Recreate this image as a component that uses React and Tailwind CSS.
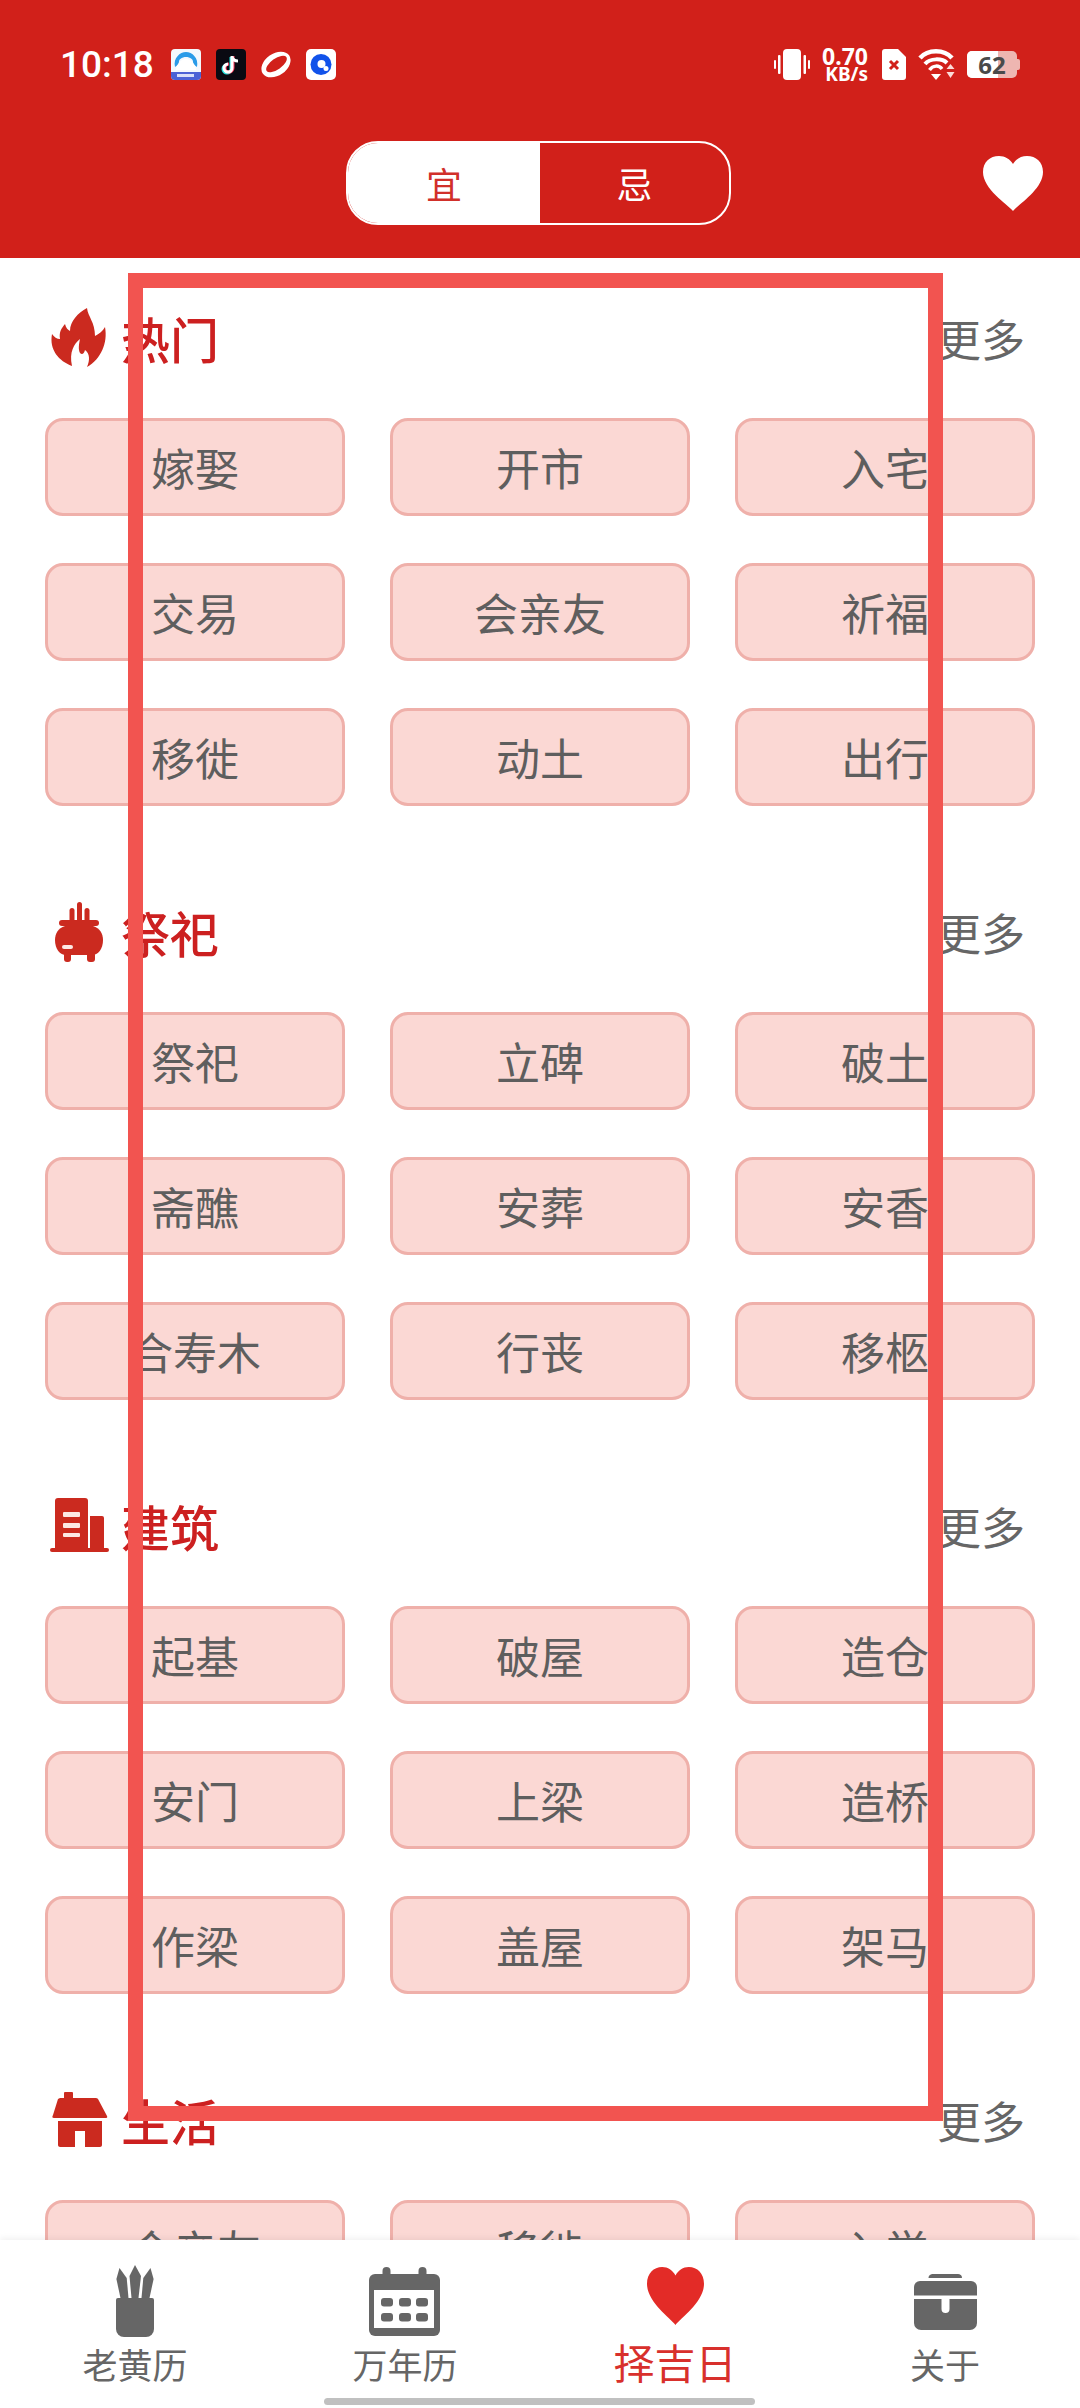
const SECTIONS = [
  { title: "热门", icon: FlameIcon, items: ["嫁娶", "开市", "入宅", "交易", "会亲友", "祈福", "移徙", "动土", "出行"] },
  { title: "祭祀", icon: CenserIcon, items: ["祭祀", "立碑", "破土", "斋醮", "安葬", "安香", "合寿木", "行丧", "移柩"] },
  { title: "建筑", icon: BuildingIcon, items: ["起基", "破屋", "造仓", "安门", "上梁", "造桥", "作梁", "盖屋", "架马"] },
  { title: "生活", icon: HouseIcon, items: ["会亲友", "移徙", "入学"] },
];

const HEART = "M30 55 C24 48 0 33 0 16 C0 6 7 0 16 0 C22 0 27 3 30 8 C33 3 38 0 44 0 C53 0 60 6 60 16 C60 33 36 48 30 55 Z";

function FlameIcon() {
  return (
    <svg width="64" height="64" viewBox="0 0 64 64" fill="#cb2a1f">
      <path d="M39 0 C40 9 47 14 47 28 C51 26 55 23 57 19 C60 35 53 51 39 59 C42 52 42 46 37 42 C36 46 34 47 32 45 C30 41 31 36 32 31 C26 36 21 44 24 58 C11 53 1 42 4 26 C6 29 9 31 12 31 C11 24 13 21 17 16 C18 20 20 22 22 23 C22 13 30 5 39 0 Z" />
    </svg>
  );
}

function CenserIcon() {
  return (
    <svg width="64" height="64" viewBox="0 0 64 64" fill="#cb2a1f">
      <rect x="29" y="0" width="5" height="20" rx="2.500" />
      <rect x="21.500" y="6" width="5" height="14" rx="2.500" />
      <rect x="36.500" y="6" width="5" height="14" rx="2.500" />
      <rect x="11" y="18" width="40" height="6" rx="3" />
      <path d="M17 24 H45 C52 26 55 32 55 38 C55 47 50 53 44 53 H18 C12 53 7 47 7 38 C7 32 10 26 17 24 Z" />
      <rect x="16" y="50" width="7" height="10" rx="3" />
      <rect x="39" y="50" width="8" height="10" rx="3" />
      <rect x="14" y="43" width="11" height="4" rx="2" fill="#fde8e4" />
    </svg>
  );
}

function BuildingIcon() {
  return (
    <svg width="64" height="64" viewBox="0 0 64 64" fill="#cb2a1f">
      <path d="M10 2 H37 A3 3 0 0 1 40 5 V53 H7 V5 A3 3 0 0 1 10 2 Z" />
      <path d="M42 20 H54 A2 2 0 0 1 56 22 V53 H42 Z" />
      <rect x="2" y="52" width="59" height="4" rx="2" />
      <rect x="15" y="16" width="17" height="5" rx="1" fill="#fde8e4" />
      <rect x="15" y="27" width="17" height="5" rx="1" fill="#fde8e4" />
      <rect x="15" y="37" width="17" height="4" rx="1" fill="#fde8e4" />
    </svg>
  );
}

function HouseIcon() {
  return (
    <svg width="64" height="64" viewBox="0 0 64 64" fill="#cb2a1f">
      <rect x="16" y="2" width="9" height="10" rx="1" />
      <path d="M12 8 H48 C49 8 50 9 50 9 L59 26 C60 28 58 28 57 28 H6 C4 28 4 27 5 25 L10 9 Z" />
      <path d="M10 31 H54 V55 C54 56 53 57 52 57 H37 V41 H27 V57 H12 C11 57 10 56 10 55 Z" />
    </svg>
  );
}

function PenCupIcon() {
  return (
    <svg width="60" height="80" viewBox="0 0 60 80" fill="#666666">
      <path d="M30 3 L36 14 L33.500 36 H26.500 L24.500 14 Z" />
      <path d="M14.500 6 L21.700 16 L23.500 36 H15.500 L11.400 17 Z" />
      <path d="M45.500 6 L48.600 17 L44.500 36 H36.500 L38.300 16 Z" />
      <path d="M13 36 H47 A2 2 0 0 1 49 38 V67 A8 8 0 0 1 41 75 H19 A8 8 0 0 1 11 67 V38 A2 2 0 0 1 13 36 Z" />
    </svg>
  );
}

function CalendarIcon() {
  return (
    <svg width="72" height="70" viewBox="0 0 72 70" fill="#666666">
      <rect x="13.500" y="0" width="8" height="14" rx="4" />
      <rect x="49.500" y="0" width="8" height="14" rx="4" />
      <rect x="0" y="7" width="71" height="62" rx="6" />
      <rect x="5" y="23" width="60" height="38" fill="#ffffff" />
      {[12, 30, 47].map((x) => (
        <g key={x}>
          <rect x={x} y="31" width="12" height="8.500" rx="3" />
          <rect x={x} y="46" width="12" height="8.500" rx="3" />
        </g>
      ))}
    </svg>
  );
}

function BoxIcon() {
  return (
    <svg width="63" height="57" viewBox="0 0 63 57" fill="#666666">
      <path d="M14.500 4 C14.500 1 17 0 19 0 H44 C46 0 48 1 48 4 Z" />
      <path d="M6 7 H57 A6 6 0 0 1 63 13 V21.500 H0 V13 A6 6 0 0 1 6 7 Z" />
      <path d="M0 25 H27.500 V35 A4 4 0 0 0 35.500 35 V25 H63 V49 A7 7 0 0 1 56 56 H7 A7 7 0 0 1 0 49 Z" />
    </svg>
  );
}

function StatusApps() {
  return (
    <div className="flex items-center gap-[15px] ml-[17px]">
      <svg width="30" height="31" viewBox="0 0 30 31">
        <rect width="30" height="31" rx="4" fill="#f4f8fd" />
        <path d="M4 18 C2 9 9 3 15 3 C21 3 28 9 26 18 L22 15 C23 10 19 8 15 8 C11 8 7 10 8 15 Z" fill="#2a9be8" />
        <path d="M5 21 C6 14 10 10 15 10 C20 10 24 14 25 21 Z" fill="#ffffff" />
        <path d="M0 23 H30 V27 A4 4 0 0 1 26 31 H4 A4 4 0 0 1 0 27 Z" fill="#4b62d6" />
        <rect x="6" y="25" width="17" height="3" fill="#d8def8" />
      </svg>
      <svg width="30" height="31" viewBox="0 0 30 31" fill="none">
        <rect width="30" height="31" rx="4" fill="#0a0a12" />
        <path d="M16 7 V19 A4 4 0 1 1 12 15" stroke="#25e4e0" strokeWidth="3" transform="translate(-1 1)" />
        <path d="M16 7 V19 A4 4 0 1 1 12 15" stroke="#fe3b5c" strokeWidth="3" transform="translate(1 0)" />
        <path d="M16 7 V19 A4 4 0 1 1 12 15 M16 8 C17 11 20 12 22 12" stroke="#ffffff" strokeWidth="3" />
      </svg>
      <svg width="30" height="31" viewBox="0 0 30 31">
        <ellipse cx="15" cy="15.500" rx="16" ry="11" transform="rotate(-35 15 15.500)" fill="#ffffff" />
        <ellipse cx="15.500" cy="15" rx="12" ry="5.500" transform="rotate(-35 15.500 15)" fill="#d1201a" />
      </svg>
      <svg width="30" height="31" viewBox="0 0 30 31">
        <rect width="30" height="31" rx="5" fill="#ffffff" />
        <circle cx="15" cy="15.500" r="10.500" fill="#1152ea" />
        <circle cx="15.500" cy="15" r="4" fill="#ffffff" />
        <circle cx="20" cy="19.500" r="2.500" fill="#ffffff" />
      </svg>
    </div>
  );
}

function StatusRight() {
  return (
    <div className="flex items-center ml-auto">
      <svg width="36" height="31" viewBox="0 0 36 31" fill="#ffffff">
        <rect x="9" y="0" width="18" height="31" rx="4" />
        <rect x="0" y="11" width="2" height="9" rx="1" />
        <rect x="4" y="6" width="2.500" height="19" rx="1" />
        <rect x="29.500" y="6" width="2.500" height="19" rx="1" />
        <rect x="34" y="11" width="2" height="9" rx="1" />
      </svg>
      <div className="w-[46px] ml-[12px] flex flex-col items-end text-white font-bold font-['Noto_Sans',sans-serif]">
        <span className="text-[23px] leading-[19px]">0.70</span>
        <span className="text-[19px] leading-[16px]">KB/s</span>
      </div>
      <svg width="24" height="31" viewBox="0 0 24 31" className="ml-[14px]">
        <path d="M3 0 H16 L24 8 V28 A3 3 0 0 1 21 31 H3 A3 3 0 0 1 0 28 V3 A3 3 0 0 1 3 0 Z" fill="#ffffff" />
        <path d="M8 12 L16 20 M16 12 L8 20" stroke="#d1201a" strokeWidth="3" />
      </svg>
      <svg width="37" height="31" viewBox="0 0 37 31" fill="none" className="ml-[12px]">
        <path d="M2 9 C10 0 26 0 34 9" stroke="#ffffff" strokeWidth="4.500" />
        <path d="M7 15 C12 9 24 9 29 14" stroke="#ffffff" strokeWidth="4" />
        <path d="M11.500 21 C15 16 21 16 24 20" stroke="#ffffff" strokeWidth="3.500" />
        <path d="M13 25 H23 L18 31 Z" fill="#ffffff" />
        <path d="M32.500 15 L36.500 20 H28.500 Z M28.500 23 H36.500 L32.500 29 Z" fill="#fcdcd8" />
      </svg>
      <div className="flex items-center ml-[12px]">
        <div className="relative w-[50px] h-[27px] rounded-[5px] bg-[#eeb6b1] flex items-center justify-center">
          <div className="absolute left-0 top-0 h-full w-[31px] rounded-l-[5px] bg-white" />
          <span className="relative text-[24px] leading-none font-bold text-[#4a4a4a] font-['Noto_Sans',sans-serif]">62</span>
        </div>
        <div className="w-[3px] h-[11px] rounded-r-[2px] bg-[#eeb6b1]" />
      </div>
    </div>
  );
}

function Section({ section }) {
  const Icon = section.icon;
  return (
    <section className="mb-[88px]">
      <div className="h-[80px] mb-[38px] flex items-center pl-[3px] pr-[10px]">
        <Icon />
        <h2 className="ml-[9px] mb-[5px] text-[49px] leading-[60px] font-medium text-[#cc2020]">{section.title}</h2>
        <span className="ml-auto mb-[5px] text-[44px] leading-[60px] text-[#666666]">更多</span>
      </div>
      <div className="grid grid-cols-3 gap-x-[45px] gap-y-[47px]">
        {section.items.map((item, i) => (
          <button
            key={i}
            className="h-[98px] rounded-[18px] border-[3px] border-[#efb0aa] bg-[#fbd8d4] text-[44px] leading-none text-[#5e5e5e] font-['Noto_Sans_CJK_SC',sans-serif]"
          >
            {item}
          </button>
        ))}
      </div>
    </section>
  );
}

function TabItem({ label, active, children }) {
  return (
    <div className="flex flex-col items-center">
      <div className="h-[80px] flex items-center justify-center">{children}</div>
      <span
        className={
          active
            ? "h-[46px] text-[41px] leading-[38px] text-[#d8302c]"
            : "h-[46px] text-[35px] leading-[44px] text-[#666666]"
        }
      >
        {label}
      </span>
    </div>
  );
}

export default function App() {
  return (
    <div className="relative w-[1080px] h-[2408px] overflow-hidden bg-white flex flex-col font-['Noto_Sans_CJK_SC','Noto_Sans',sans-serif]">
      {/* Header */}
      <header className="shrink-0 h-[258px] bg-[#d1201a] pt-[49px]">
        <div className="h-[31px] flex items-center pl-[60px] pr-[60px]">
          <span className="text-[37px] leading-none font-medium text-white font-['Roboto',sans-serif]">10:18</span>
          <StatusApps />
          <StatusRight />
        </div>
        <div className="flex items-center justify-between pl-[346px] pr-[37px] pt-[61px]">
          <div className="flex w-[385px] h-[84px] rounded-[32px] border-2 border-white overflow-hidden">
            <div className="w-[192px] bg-white flex items-center justify-center text-[36px] text-[#d1302a]">宜</div>
            <div className="flex-1 flex items-center justify-center text-[36px] text-white">忌</div>
          </div>
          <svg width="60" height="55" viewBox="0 0 60 55" fill="#ffffff">
            <path d={HEART} />
          </svg>
        </div>
      </header>

      {/* Content */}
      <main className="flex-1 min-h-0 overflow-hidden px-[45px] pt-[42px]">
        {SECTIONS.map((section) => (
          <Section key={section.title} section={section} />
        ))}
      </main>

      {/* Tab bar */}
      <nav className="shrink-0 h-[168px] bg-white shadow-[0_-2px_6px_rgba(0,0,0,0.06)] grid grid-cols-4 pt-[22px] z-10">
        <TabItem label="老黄历">
          <PenCupIcon />
        </TabItem>
        <TabItem label="万年历">
          <CalendarIcon />
        </TabItem>
        <TabItem label="择吉日" active>
          <svg width="57" height="58" viewBox="0 0 60 55" preserveAspectRatio="none" fill="#e32b27" className="mb-[12px]">
            <path d={HEART} />
          </svg>
        </TabItem>
        <TabItem label="关于">
          <BoxIcon />
        </TabItem>
      </nav>

      {/* Gesture bar */}
      <div className="absolute left-[324px] bottom-[3px] w-[431px] h-[7px] rounded-full bg-[#c0c0c0] z-20" />

      {/* Annotation box drawn over the page */}
      <div className="absolute left-[128px] top-[273px] w-[815px] h-[1848px] border-[15px] border-[#f25450] z-20" />
    </div>
  );
}
